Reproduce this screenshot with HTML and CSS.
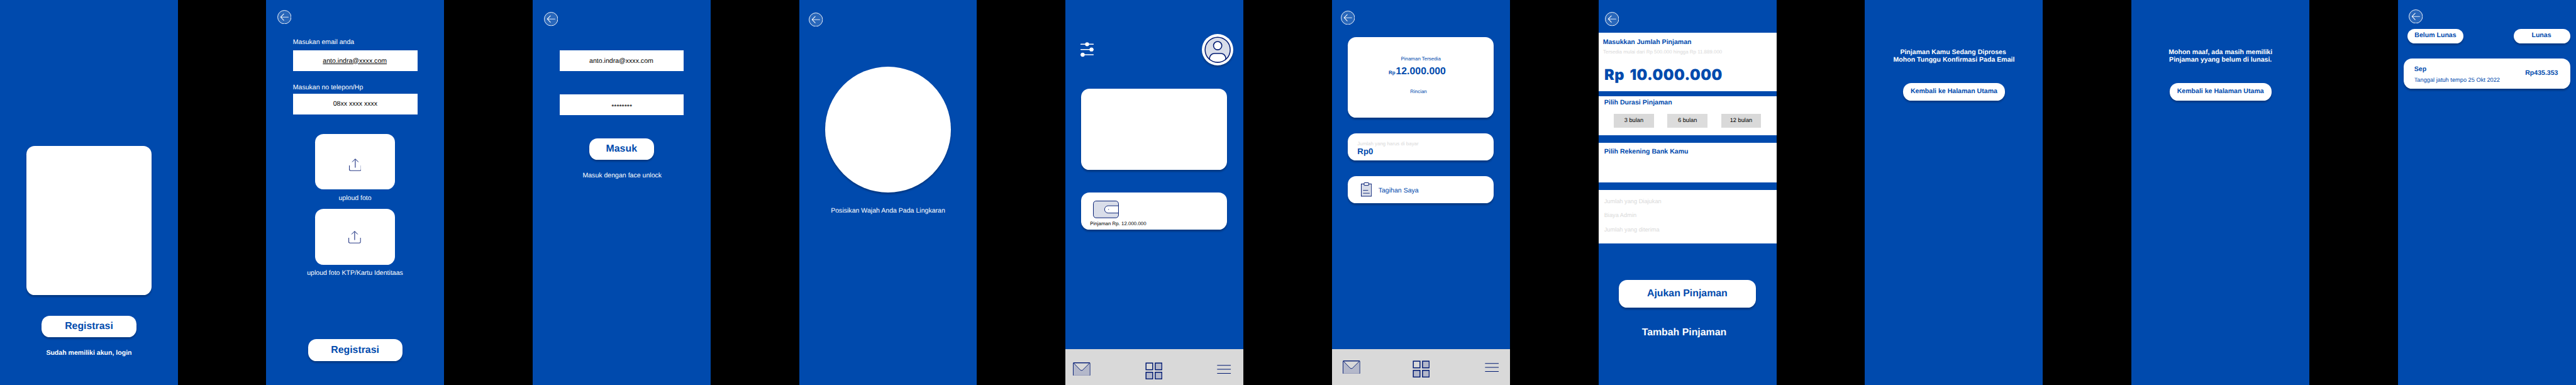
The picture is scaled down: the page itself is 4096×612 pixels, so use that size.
FILE: index.html
```html
<!DOCTYPE html>
<html lang="id">
<head>
<meta charset="utf-8">
<title>Pinjaman</title>
<link rel="stylesheet" href="styles.css">
</head>
<body>
<svg class="sprite" aria-hidden="true">
  <symbol id="back" viewBox="0 0 34 34">
    <circle cx="17" cy="17" r="16.2" fill="#fff" fill-opacity=".16" stroke="#fff" stroke-width="1.4"/>
    <path d="M26.3 17H8.3" fill="none" stroke="#fff" stroke-opacity=".85" stroke-width="1.7" stroke-linecap="round"/>
    <path d="M15.5 9.4L8 17l7.5 7.6" fill="none" stroke="#fff" stroke-width="1.6" stroke-linecap="round" stroke-linejoin="round"/>
  </symbol>
  <symbol id="upload" viewBox="0 0 30 30">
    <path d="M.8 16.5v9.7a3 3 0 0 0 3 3h22.4a3 3 0 0 0 3-3V16.5M15 22V1.5" fill="none" stroke="#2b3d88" stroke-width="1.8"/>
    <path d="M7.6 8.3L15 .9l7.4 7.4" fill="none" stroke="#001a72" stroke-width="1.5"/>
  </symbol>
  <symbol id="mail" viewBox="0 0 42 33">
    <rect x=".8" y=".8" width="40.4" height="31.4" rx="1.5" fill="#b4b8ca"/>
    <path d="M1.5 1.5l16.500 17q2.700 2 5.400 0L40.500 1.500z" fill="#d9d9d9" stroke="#001a72" stroke-width="1.4"/>
    <rect x=".7" y=".7" width="40.6" height="31.6" rx="1.5" fill="none" stroke="#001a72" stroke-width="1.5"/>
  </symbol>
  <symbol id="grid" viewBox="0 0 42 42">
    <g fill="#b4b8ca" stroke="#001a72" stroke-width="2.3">
      <rect x="1.9" y="1.7" width="16" height="16" fill="#d9d9d9"/>
      <rect x="24.100" y="1.7" width="16" height="16"/>
      <rect x="1.9" y="23.900" width="16" height="16"/>
      <rect x="24.100" y="23.900" width="16" height="16"/>
    </g>
  </symbol>
  <symbol id="menu" viewBox="0 0 34 22">
    <path d="M.5 1h33M.5 10.600h33M.5 20.300h33" fill="none" stroke="#001a72" stroke-width="1.6"/>
  </symbol>
</svg>

<main class="board">
  <section class="screen welcome">
    <div class="hero"></div>
    <button class="button">Registrasi</button>
    <a class="text strong link">Sudah memiliki akun, login</a>
  </section>

  <section class="screen register">
    <svg class="back"><use href="#back"/></svg>
    <label class="text label">Masukan email anda</label>
    <div class="field email"><u>anto.indra@xxxx.com</u></div>
    <label class="text label phone-label">Masukan no telepon/Hp</label>
    <div class="field phone">08xx xxxx xxxx</div>
    <div class="upload first"><svg class="upload-icon"><use href="#upload"/></svg></div>
    <p class="text caption">uploud foto</p>
    <div class="upload second"><svg class="upload-icon"><use href="#upload"/></svg></div>
    <p class="text caption">uploud foto KTP/Kartu Identitaas</p>
    <button class="button">Registrasi</button>
  </section>

  <section class="screen login">
    <svg class="back"><use href="#back"/></svg>
    <div class="field email">anto.indra@xxxx.com</div>
    <div class="field password">********</div>
    <button class="button">Masuk</button>
    <p class="text face">Masuk dengan face unlock</p>
  </section>

  <section class="screen scan">
    <svg class="back"><use href="#back"/></svg>
    <div class="lens"></div>
    <p class="text">Posisikan Wajah Anda Pada Lingkaran</p>
  </section>

  <section class="screen home">
    <header class="topbar">
      <svg class="filter" viewBox="0 0 32 36">
        <path d="M1 5h30M1 17.7h30M1 30.2h30" fill="none" stroke="#fff" stroke-width="2.2" stroke-linecap="round"/>
        <g fill="#fff"><circle cx="16" cy="5" r="4.8"/><circle cx="26.5" cy="17.7" r="4.8"/><circle cx="5.3" cy="30.2" r="4.8"/></g>
      </svg>
      <span class="avatar">
        <svg viewBox="0 0 64 64">
          <defs><clipPath id="disc"><circle cx="32" cy="32" r="31"/></clipPath></defs>
          <circle cx="32" cy="32" r="30" fill="#d9dde9"/>
          <g clip-path="url(#disc)" fill="#fff" stroke="#001a72" stroke-width="2.4">
            <path d="M12.5 66V52q2-11.2 12-11.2h15q10 0 12 11.2v14z"/>
          </g>
          <circle cx="32" cy="22" r="10" fill="#fff" stroke="#001a72" stroke-width="2.4"/>
          <circle cx="32" cy="32" r="30.2" fill="none" stroke="#001a72" stroke-width="2.4"/>
        </svg>
      </span>
    </header>
    <div class="card banner"></div>
    <div class="card loan">
      <svg class="wallet" viewBox="0 0 62 42">
        <rect x=".8" y=".8" width="60.4" height="40.4" rx="6.5" fill="#d9dde9" stroke="#001a72" stroke-width="1.5"/>
        <path d="M61.2 12.3H36.5a8.7 8.7 0 0 0 0 17.4h24.7z" fill="#fff" stroke="#001a72" stroke-width="1.4"/>
        <circle cx="37.4" cy="21" r=".8" fill="#001a72"/>
      </svg>
      <p class="tiny">Pinjaman Rp. 12.000.000</p>
    </div>
    <nav class="nav">
      <svg class="mail"><use href="#mail"/></svg>
      <svg class="grid"><use href="#grid"/></svg>
      <svg class="menu"><use href="#menu"/></svg>
    </nav>
  </section>

  <section class="screen credit">
    <svg class="back"><use href="#back"/></svg>
    <div class="card limit">
      <p class="tiny">Pinaman Tersedia</p>
      <p class="amount"><span class="currency">Rp</span><b>12.000.000</b></p>
      <p class="tiny detail">Rincian</p>
    </div>
    <div class="card due">
      <p class="tiny muted">Jumlah yang harus di bayar</p>
      <p class="total">Rp0</p>
    </div>
    <div class="card bills">
      <svg class="clipboard" viewBox="0 0 26 34">
        <rect x=".8" y="3.6" width="24.4" height="29.6" fill="#d9dde9" stroke="#001a72" stroke-width="1.5"/>
        <rect x="7.6" y=".8" width="11" height="6.2" rx=".6" fill="#fff" stroke="#001a72" stroke-width="1.5"/>
        <path d="M5 19h12.3M5 26h16" fill="none" stroke="#001a72" stroke-width="1.3"/>
      </svg>
      <p class="text">Tagihan Saya</p>
    </div>
    <nav class="nav">
      <svg class="mail"><use href="#mail"/></svg>
      <svg class="grid"><use href="#grid"/></svg>
      <svg class="menu"><use href="#menu"/></svg>
    </nav>
  </section>

  <section class="screen apply">
    <svg class="back"><use href="#back"/></svg>
    <div class="panel sum">
      <h2 class="text strong">Masukkan Jumlah Pinjaman</h2>
      <p class="tiny muted">Tersedia mulai dari Rp 500.000 hingga Rp 11.889.000</p>
      <p class="big">Rp 10.000.000</p>
    </div>
    <div class="panel term">
      <h2 class="text strong">Pilih Durasi Pinjaman</h2>
      <div class="options">
        <span class="option">3 bulan</span>
        <span class="option active">6 bulan</span>
        <span class="option">12 bulan</span>
      </div>
    </div>
    <div class="panel bank">
      <h2 class="text strong">Pilih Rekening Bank Kamu</h2>
    </div>
    <div class="panel recap">
      <p class="small muted">Jumlah yang Diajukan</p>
      <p class="small muted">Biaya Admin</p>
      <p class="small muted">Jumlah yang diterima</p>
    </div>
    <button class="button">Ajukan Pinjaman</button>
    <a class="more">Tambah Pinjaman</a>
  </section>

  <section class="screen notice">
    <p class="message"><span class="line lead">Pinjaman Kamu Sedang Diproses</span><span class="line">Mohon Tunggu Konfirmasi Pada Email</span></p>
    <button class="button">Kembali ke Halaman Utama</button>
  </section>

  <section class="screen notice">
    <p class="message"><span class="line">Mohon maaf, ada masih memiliki</span><span class="line">Pinjaman yyang belum di lunasi.</span></p>
    <button class="button">Kembali ke Halaman Utama</button>
  </section>

  <section class="screen history">
    <svg class="back"><use href="#back"/></svg>
    <div class="tabs">
      <button class="button tab">Belum Lunas</button>
      <button class="button tab paid">Lunas</button>
    </div>
    <div class="bill">
      <div>
        <p class="text strong">Sep</p>
        <p class="small">Tanggal jatuh tempo 25 Okt 2022</p>
      </div>
      <p class="text strong price">Rp435.353</p>
    </div>
  </section>
</main>
</body>
</html>
```
FILE: styles.css
```css
/* 1rem = 10 units of the 6196-unit wide board */
html { font-size: calc(100vw / 619.6); }
* { box-sizing: border-box; margin: 0; padding: 0; }
body { background: #000; font-family: "Liberation Sans", Arial, sans-serif; text-rendering: geometricPrecision; overflow: hidden; }
svg { display: block; flex: none; }
.sprite { width: 0; height: 0; position: absolute; }

.board { display: flex; gap: 21.3rem; width: 100vw; height: 100vh; }
.screen { flex: none; width: 42.8rem; height: 100%; background: #004aad; color: #fff; display: flex; flex-direction: column; align-items: center; }
.screen:first-child { margin-right: -0.1rem; }

.text { font-size: 1.6rem; line-height: 1.6rem; font-weight: 400; white-space: nowrap; }
.small { font-size: 1.4rem; line-height: 1.4rem; white-space: nowrap; }
.tiny { font-size: 1.2rem; line-height: 1.2rem; white-space: nowrap; }
.strong { font-weight: 700; }
.muted { color: #d9d9d9; }

.button { flex: none; border: 0; border-radius: 2rem; background: #fff; color: #004aad; font: 700 2.4rem/2.4rem "Liberation Sans", Arial, sans-serif; text-rendering: geometricPrecision; white-space: nowrap; width: 22.7rem; height: 5.2rem; box-shadow: 0 .4rem .4rem rgba(0, 0, 0, .25); }
.back { width: 3.4rem; height: 3.4rem; align-self: flex-start; }
.field { flex: none; width: 29.9rem; height: 5rem; margin-left: .1rem; background: #fff; color: #000; font-size: 1.6rem; line-height: 1.6rem; display: flex; align-items: center; justify-content: center; }
.card { flex: none; width: 35.1rem; margin-right: .1rem; background: #fff; color: #004aad; border-radius: 2rem; box-shadow: 0 .4rem .4rem rgba(0, 0, 0, .25); }

/* welcome */
.hero { flex: none; width: 30rem; height: 35.9rem; margin-top: 35.1rem; background: #fff; border-radius: 2rem; box-shadow: 0 .4rem .4rem rgba(0, 0, 0, .25); }
.welcome .button { margin-top: 4.9rem; }
.link { margin-top: 3rem; }

/* register */
.register .back { margin: 2.4rem 0 0 2.7rem; }
.label { align-self: flex-start; margin: 3.55rem 0 0 6.45rem; }
.register .email { margin-top: 1.15rem; padding: .1rem .2rem 0 0; }
.phone-label { margin-top: 3.12rem; }
.phone { margin-top: .68rem; }
.upload { flex: none; width: 19.2rem; height: 13.4rem; background: #fff; border-radius: 2rem; display: flex; align-items: center; justify-content: center; }
.upload-icon { width: 3rem; height: 3rem; }
.first { margin-top: 4.7rem; padding-top: 1.4rem; }
.second { margin-top: 1.85rem; padding-right: .2rem; }
.caption { margin-top: 1.25rem; }
.register .button { margin-top: 15.05rem; }

/* login */
.login .back { margin: 2.9rem 0 0 2.7rem; }
.login .email { margin-top: 5.8rem; padding: .1rem .2rem 0 0; }
.password { margin-top: 5.6rem; padding-top: 1.1rem; }
.login .button { margin-top: 5.6rem; width: 15.6rem; height: 5.1rem; }
.face { margin: 3.05rem 0 0 .3rem; }

/* face scan */
.scan .back { margin: 3rem 0 0 2.4rem; }
.lens { flex: none; width: 30.3rem; height: 30.3rem; margin: 9.6rem .1rem 0 0; border-radius: 50%; background: #fff; box-shadow: 0 .4rem .4rem rgba(0, 0, 0, .25); }
.scan .text { margin-top: 3.67rem; }

/* home */
.topbar { flex: none; width: 100%; height: 7.6rem; margin-top: 8.2rem; padding: 0 2.4rem 0 3.6rem; display: flex; align-items: center; justify-content: space-between; }
.filter { width: 3.2rem; height: 3.6rem; }
.avatar { width: 7.6rem; height: 7.6rem; border-radius: 50%; background: #fff; box-shadow: 0 .4rem .4rem rgba(0, 0, 0, .25); display: flex; align-items: center; justify-content: center; }
.avatar svg { width: 6.4rem; height: 6.4rem; }
.banner { height: 19.4rem; margin-top: 5.6rem; }
.loan { height: 8.9rem; margin-top: 5.5rem; padding-top: 2rem; }
.wallet { width: 6.2rem; height: 4.2rem; margin-left: 2.8rem; }
.loan .tiny { margin: .7rem 0 0 2.1rem; color: #000; }
.nav { flex: none; width: 100%; height: 8.6rem; margin-top: auto; background: #d9d9d9; display: flex; align-items: flex-start; padding: 3.1rem 0 0 1.8rem; }
.mail { width: 4.2rem; height: 3.3rem; }
.grid { width: 4.2rem; height: 4.2rem; margin-left: 13.1rem; }
.menu { width: 3.4rem; height: 2.2rem; margin: .6rem 0 0 13.15rem; }

/* credit */
.credit .back { margin: 2.5rem 0 0 2.1rem; }
.limit { height: 19.4rem; margin-top: 3rem; padding-top: 4.67rem; }
.limit .tiny { text-align: center; }
.amount { display: flex; align-items: baseline; gap: .15rem; margin: 1.2rem 0 0 9.8rem; font-size: 2.4rem; line-height: 2.4rem; }
.currency { font-size: 1.2rem; font-weight: 700; }
.limit .detail { margin-top: 2.75rem; padding-right: 1.1rem; }
.due { height: 6.5rem; margin-top: 3.8rem; padding: 1.9rem 0 0 2.3rem; }
.total { margin-top: .2rem; font-size: 2rem; line-height: 2rem; font-weight: 700; }
.bills { height: 6.5rem; margin-top: 3.8rem; display: flex; padding: 1.5rem 0 0 3.1rem; }
.clipboard { width: 2.6rem; height: 3.4rem; }
.bills .text { margin: 1.2rem 0 0 1.65rem; }
.credit .nav { padding: 2.65rem 0 0 2.6rem; }
.credit .grid { margin-left: 12.5rem; }
.credit .menu { margin-left: 13.2rem; }

/* apply */
.apply .back { margin: 2.9rem 0 1.6rem 1.5rem; }
.panel { flex: none; width: 100%; background: #fff; color: #004aad; padding-left: 1.35rem; }
.panel .muted { color: #d9d9d9; }
.sum { height: 14rem; padding: 1.45rem 0 0 1.05rem; }
.sum .tiny { margin: 1.07rem 0 0 .05rem; }
.big { margin: 3rem 0 0 .35rem; font: 900 3.57rem/3.6rem Inter, "Liberation Sans", sans-serif; letter-spacing: .07rem; word-spacing: .5rem; white-space: nowrap; }
.term { height: 9.5rem; margin-top: 1.2rem; padding-top: .75rem; }
.options { display: flex; gap: 3.3rem; margin: 1.95rem 0 0 2.35rem; }
.option { width: 9.6rem; height: 3.3rem; background: #d9d9d9; color: #000; font-size: 1.4rem; line-height: 1.4rem; display: flex; align-items: center; justify-content: center; }
.active { background: #dcdcdc; }
.bank { height: 9.5rem; margin-top: 1.8rem; padding-top: 1.35rem; }
.recap { height: 12.8rem; margin-top: 1.8rem; padding-top: 2.05rem; display: flex; flex-direction: column; gap: 2rem; }
.apply .button { width: 32.9rem; height: 6.6rem; margin: 8.9rem .1rem 0 0; }
.more { margin: 4.87rem 1.6rem 0 0; font-size: 2.4rem; line-height: 2.4rem; font-weight: 700; white-space: nowrap; }

/* notices */
.message { margin-top: 11.78rem; font-size: 1.6rem; line-height: 1.8rem; font-weight: 700; }
.line { display: block; text-align: center; white-space: nowrap; }
.lead { padding-right: .4rem; }
.notice .button { width: 24.5rem; height: 4.2rem; margin-top: 4.62rem; font-size: 1.6rem; padding-top: .1rem; }

/* history */
.history .back { margin: 2.2rem 0 0 2.6rem; }
.tabs { width: 39.2rem; display: flex; justify-content: space-between; margin: 1.3rem 0 0 .8rem; }
.tab { width: 13.6rem; height: 3.5rem; font-size: 1.6rem; }
.paid { padding-right: .2rem; }
.bill { flex: none; width: 40rem; height: 7.3rem; margin-top: 3.7rem; padding: 1.85rem 2.9rem 0 2.5rem; background: #fff; color: #004aad; border-radius: 2rem; box-shadow: 0 .4rem .4rem rgba(0, 0, 0, .25); display: flex; justify-content: space-between; }
.bill .small { margin-top: 1.07rem; }
.price { margin-top: .9rem; }
```
